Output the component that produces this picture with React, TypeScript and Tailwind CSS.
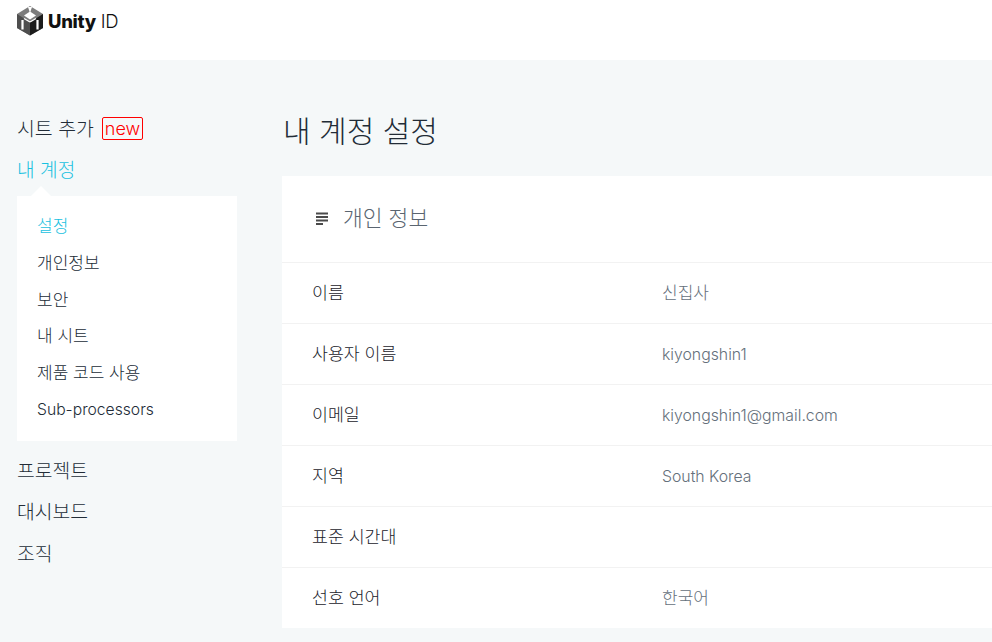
import React from 'react';

const menu = [
  { label: '설정', active: true, size: 'text-[17px]' },
  { label: '개인정보', size: 'text-[17px]' },
  { label: '보안', size: 'text-[17px]' },
  { label: '내 시트', size: 'text-[17px]' },
  { label: '제품 코드 사용', size: 'text-[17px]' },
  { label: 'Sub-processors', size: 'text-[15.7px]' },
];

const rows = [
  { label: '이름', value: '신집사', size: 'text-[17px]' },
  { label: '사용자 이름', value: 'kiyongshin1', size: 'text-[15.8px]' },
  { label: '이메일', value: 'kiyongshin1@gmail.com', size: 'text-[15.8px]' },
  { label: '지역', value: 'South Korea', size: 'text-[15.8px]' },
  { label: '표준 시간대', value: '', size: 'text-[15.8px]' },
  { label: '선호 언어', value: '한국어', size: 'text-[17px]' },
];

function UnityLogo() {
  return (
    <svg width="28" height="30" viewBox="0 0 28 30" className="shrink-0">
      <polygon points="14,0 27,8 27,22 14,29.5 1,22 1,8" fill="#7c7c7c" />
      <polygon points="1,8 14,16 14,29.5 1,22" fill="#4e4e4e" />
      <polygon points="27,8 14,16 14,29.5 27,22" fill="#1c1c1c" />
      <polygon points="14,5.5 20,9.5 14,13.5 8,9.5" fill="#fff" />
      <polygon points="12,1 16,1 14,7" fill="#fff" />
      <path d="M6.5 14V23.5M21.5 14V23.5" stroke="#fff" strokeWidth="2.2" fill="none" />
      <path d="M14 16L8 12.5M14 16L20 12.5" stroke="#fff" strokeWidth="1.4" fill="none" />
    </svg>
  );
}

export default function App() {
  return (
    <div className="h-[642px] w-[992px] overflow-hidden bg-[#f5f8f9] font-['Inter','Noto_Sans_CJK_KR',sans-serif]">
      {/* Header */}
      <div className="h-[60px] bg-white pl-[16px] pt-[6px]">
        <div className="flex items-center gap-[4px]">
          <UnityLogo />
          <span className="text-[18.5px] leading-[30px] tracking-[-0.3px] text-[#111]">
            <span className="font-extrabold">Unity</span> <span className="font-light">ID</span>
          </span>
        </div>
      </div>

      <div className="flex">
        {/* Sidebar */}
        <div className="w-[282px] shrink-0 pl-[17px] pt-[55px] font-light">
          <div className="flex h-[29px] items-center text-[19.4px] text-[#222c37]">
            <span>시트 추가</span>
            <span className="ml-[8px] -mt-[2px] rounded-[2px] border border-[#ff0000] px-[2px] text-[18px] font-light leading-[21px] text-[#ff0000]">new</span>
          </div>
          <div className="mt-[12px] h-[28px] text-[19.2px] leading-[28px] text-[#19c1e0]">내 계정</div>
          <div className="relative mt-[12px] w-[220px] bg-white pb-[13px] pt-[11px]">
            <div className="absolute left-[14px] top-[-10px] h-0 w-0 border-x-[10px] border-b-[10px] border-x-transparent border-b-white" />
            {menu.map((m) => (
              <div
                key={m.label}
                className={`h-[36.8px] pl-[20px] leading-[38px] ${m.size} ${m.active ? 'text-[#19c1e0]' : 'text-[#222c37]'}`}
              >
                {m.label}
              </div>
            ))}
          </div>
          <div className="mt-[16px] h-[28px] text-[19.3px] leading-[28px] text-[#222c37]">프로젝트</div>
          <div className="mt-[13.5px] h-[28px] text-[19.3px] leading-[28px] text-[#222c37]">대시보드</div>
          <div className="mt-[14px] h-[28px] text-[19.3px] leading-[28px] text-[#222c37]">조직</div>
        </div>

        {/* Main */}
        <div className="min-w-0 flex-1">
          <h1 className="mt-[48px] h-[68px] pl-[1px] text-[30px] font-light leading-[46px] text-[#222c37]">내 계정 설정</h1>
          <div className="bg-white">
            <div className="flex h-[87px] items-center gap-[15px] border-b border-[#f2f2f2] pb-[2px] pl-[34px]">
              <svg width="12" height="14" viewBox="0 0 12 14" className="mt-[1px]">
                <path d="M0 1.5H12M0 5H12M0 8.5H12M0 12H7" stroke="#4a4a4a" strokeWidth="1.8" />
              </svg>
              <span className="text-[21.5px] font-light text-[#5a6570]">개인 정보</span>
            </div>
            {rows.map((r, i) => (
              <div
                key={r.label}
                className={`flex items-center font-light ${i < rows.length - 1 ? 'h-[61px] border-b border-[#f2f2f2]' : 'h-[60px]'}`}
              >
                <div className="w-[380px] pl-[30px] text-[17.3px] text-[#1a222b]">{r.label}</div>
                <div className={`pt-[1px] text-[#65707b] ${r.size}`}>{r.value}</div>
              </div>
            ))}
          </div>
        </div>
      </div>
    </div>
  );
}
